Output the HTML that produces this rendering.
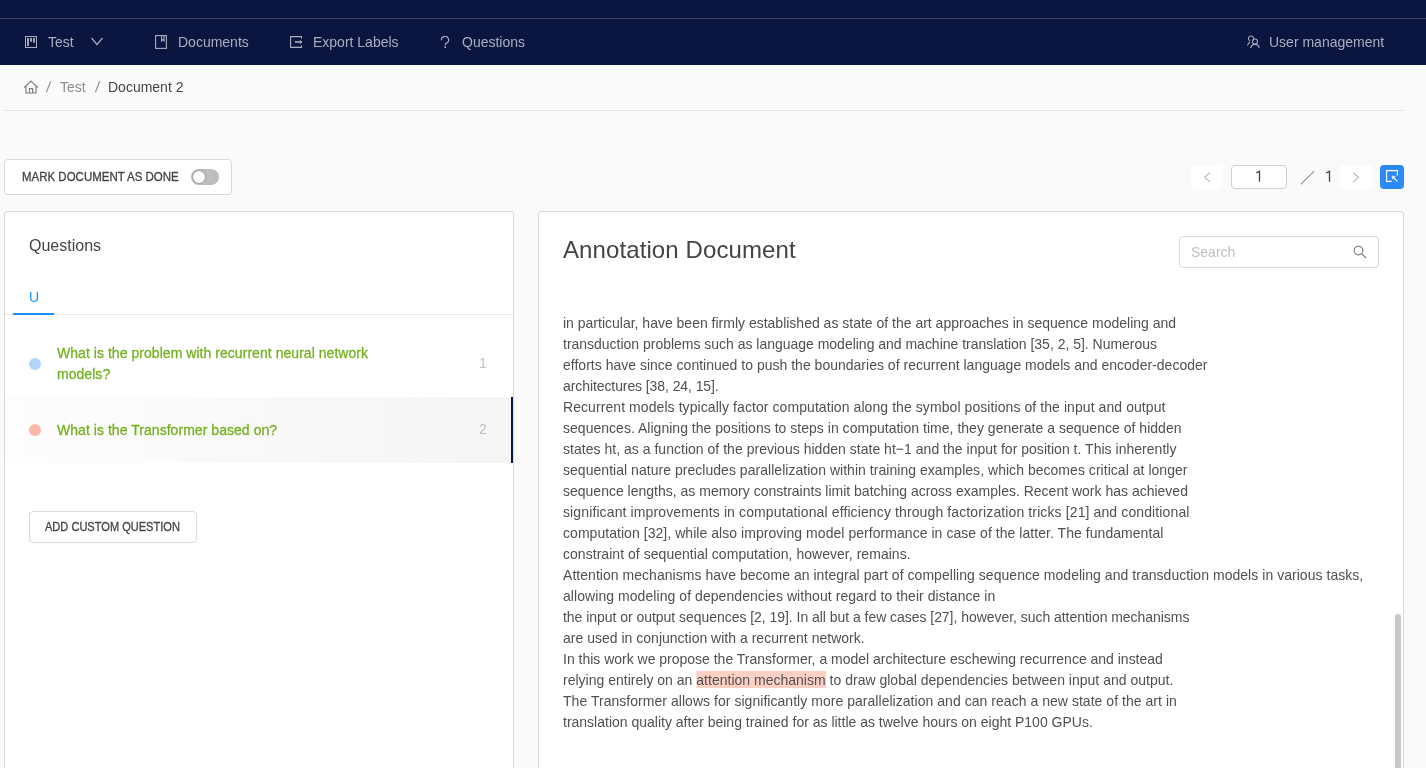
<!DOCTYPE html>
<html><head><meta charset="utf-8">
<style>
*{box-sizing:border-box;margin:0;padding:0}
body{will-change:transform}
html,body{width:1426px;height:768px;overflow:hidden;background:#fafafa;font-family:"Liberation Sans",sans-serif;font-size:14px;color:#595959}
.abs{position:absolute}
#top{left:0;top:0;width:1426px;height:65px;background:#0b1640}
#topline{left:0;top:18px;width:1426px;height:1px;background:#3b4468}
.nav{color:#aaaebf;font-size:14px;line-height:16px;white-space:nowrap}
.t15{font-size:15px !important;transform:scaleX(0.933);transform-origin:0 0}
svg{display:block}
#bc{left:0;top:64px;width:1426px;height:46px;background:#fafafa}
#bcline{left:4px;top:110px;width:1400px;height:1px;background:#e4e4e4}
.btn{background:#fff;border:1px solid #d9d9d9;border-radius:4px}
.panel{background:#fff;border:1px solid #d9d9d9;border-radius:3px}
.q{color:#74b01f;font-size:14px;line-height:21px;letter-spacing:0.05px;-webkit-text-stroke:0.3px #74b01f}
.ln{height:21px;transform:scaleX(0.933);transform-origin:0 0}
.doc{left:563px;top:312px;width:900px;font-size:15px;line-height:21px;color:#505050;white-space:nowrap}
</style></head><body>
<div id="top" class="abs"></div>
<div id="topline" class="abs"></div>

<!-- nav -->
<div class="abs" style="left:25px;top:36px"><svg width="12" height="12" viewBox="0 0 12 12"><rect x="0.5" y="0.5" width="11" height="11" fill="none" stroke="#aaaebf" stroke-width="1"/><rect x="2" y="2" width="2" height="8" fill="#9ea3b8"/><rect x="5" y="2" width="2" height="3.7" fill="#9ea3b8"/><rect x="8" y="2" width="2" height="4.6" fill="#9ea3b8"/></svg></div>
<div class="abs nav t15" style="left:48px;top:34px">Test</div>
<div class="abs" style="left:91px;top:37px"><svg width="12" height="9" viewBox="0 0 12 9" fill="none" stroke="#aaaebf" stroke-width="1.2"><path d="M0.5 1L6 7.5L11.5 1"/></svg></div>

<div class="abs" style="left:155px;top:35px"><svg width="12" height="14" viewBox="0 0 12 14" fill="none" stroke="#aaaebf" stroke-width="1.1"><rect x="0.6" y="0.6" width="10.8" height="12.8"/><path d="M6.6 0.6v5.2l1.2-1.2l1.2 1.2v-5.2"/></svg></div>
<div class="abs nav t15" style="left:178px;top:34px">Documents</div>

<div class="abs" style="left:290px;top:36px"><svg width="13" height="13" viewBox="0 0 13 13" fill="none" stroke="#aaaebf" stroke-width="1.1"><path d="M11.5 2.5V0.6H0.6V11.4H11.5V9.4"/><path d="M5 6h6" stroke-width="1.6"/><path d="M10.3 4.5L12 6L10.3 7.5Z" fill="#aaaebf" stroke-width="0.8"/></svg></div>
<div class="abs nav t15" style="left:313px;top:34px">Export Labels</div>

<div class="abs" style="left:439px;top:36px"><svg width="12" height="12" viewBox="0 0 12 12" fill="none" stroke="#aaaebf" stroke-width="1.2"><path d="M2.4 4.2A3.6 3.6 0 1 1 7.6 7.1Q6.2 7.8 6.2 9.3"/><rect x="5.4" y="10.4" width="1.6" height="1.6" fill="#aaaebf" stroke="none"/></svg></div>
<div class="abs nav t15" style="left:462px;top:34px">Questions</div>

<div class="abs" style="left:1246px;top:35px"><svg width="14" height="14" viewBox="0 0 14 14" fill="none" stroke="#aaaebf" stroke-width="1.1"><path d="M4.14 5.85A2.5 2.5 0 1 1 7.46 3.93"/><circle cx="9" cy="6.5" r="2.5"/><path d="M1.5 10.5Q2 8 4.2 7M4.6 13Q5.5 9.4 9 9.4Q12.5 9.4 13.3 13"/></svg></div>
<div class="abs nav t15" style="left:1269px;top:34px">User management</div>

<!-- breadcrumb -->
<div class="abs" style="left:23px;top:80px"><svg width="16" height="14" viewBox="0 0 16 14" fill="none" stroke="#7f7f7f" stroke-width="1.2"><path d="M1.3 7.5L7.9 1L14.8 7.5M3 6.8V13H13V6.8M6.5 13V8.6H9.6V13"/></svg></div>
<div class="abs" style="left:45px;top:80px"><svg width="7" height="14" viewBox="0 0 7 14" fill="none" stroke="#8c8c8c" stroke-width="1.1"><path d="M5.7 1.2L1.4 12.3"/></svg></div>
<div class="abs t15" style="left:60px;top:79px;color:#8c8c8c;line-height:16px">Test</div>
<div class="abs" style="left:94px;top:80px"><svg width="7" height="14" viewBox="0 0 7 14" fill="none" stroke="#8c8c8c" stroke-width="1.1"><path d="M5.7 1.2L1.4 12.3"/></svg></div>
<div class="abs t15" style="left:108px;top:79px;color:#444;line-height:16px">Document 2</div>
<div id="bcline" class="abs"></div>

<!-- mark done -->
<div class="abs btn" style="left:4px;top:159px;width:228px;height:36px"></div>
<div class="abs" style="left:21.5px;top:170px;font-size:12px;transform:scaleX(0.957);transform-origin:0 0;-webkit-text-stroke:0.3px #444;color:#444;line-height:14px;white-space:nowrap">MARK DOCUMENT AS DONE</div>
<div class="abs" style="left:191px;top:169px;width:28px;height:16px;border-radius:8px;background:#bcbdbc"></div>
<div class="abs" style="left:193px;top:171px;width:12px;height:12px;border-radius:6px;background:#fff;box-shadow:0 0 1.5px 0.5px rgba(0,0,0,.28)"></div>

<!-- pager -->
<div class="abs" style="left:1191px;top:165px;width:32px;height:24px;background:#fff;border-radius:4px"></div>
<div class="abs" style="left:1203px;top:172px"><svg width="8" height="11" viewBox="0 0 8 11" fill="none" stroke="#999" stroke-width="1"><path d="M7 0.6L1.6 5.3L7 10"/></svg></div>
<div class="abs btn" style="left:1231px;top:165px;width:56px;height:24px;border-color:#d0d0d0"></div>
<div class="abs" style="left:1255px;top:170px"><svg width="8" height="13" viewBox="0 0 8 13" fill="none" stroke="#444" stroke-width="1.3"><path d="M1.2 3L4.5 1.3V11.8"/></svg></div>
<div class="abs" style="left:1300px;top:171px"><svg width="14" height="14" viewBox="0 0 14 14" fill="none" stroke="#555" stroke-width="0.95"><path d="M1 13.3L14 0.4"/></svg></div>
<div class="abs" style="left:1325px;top:170px"><svg width="8" height="13" viewBox="0 0 8 13" fill="none" stroke="#444" stroke-width="1.3"><path d="M1.2 3L4.5 1.3V11.8"/></svg></div>
<div class="abs" style="left:1340px;top:165px;width:32px;height:24px;background:#fff;border-radius:4px"></div>
<div class="abs" style="left:1352px;top:172px"><svg width="8" height="11" viewBox="0 0 8 11" fill="none" stroke="#999" stroke-width="1"><path d="M1.2 0.6L6.6 5.3L1.2 10"/></svg></div>
<div class="abs" style="left:1380px;top:165px;width:24px;height:24px;background:#2b8af7;border-radius:4px"></div>
<div class="abs" style="left:1386px;top:170px"><svg width="13" height="13" viewBox="0 0 13 13" fill="none" stroke="#fff" stroke-width="1.1"><path d="M11.4 5.4V0.6H0.6V11.4H5.7"/><path d="M11.6 11.6L7.5 7.5"/><path d="M6.2 6.2L9.1 6.5L6.5 9.1Z" fill="#fff" stroke-width="0.6"/></svg></div>

<!-- left panel -->
<div class="abs panel" style="left:4px;top:211px;width:510px;height:600px"></div>
<div class="abs" style="left:29px;top:237px;font-size:16px;line-height:18px;color:#444">Questions</div>
<div class="abs" style="left:29px;top:289px;font-size:14px;line-height:16px;color:#1890ff">U</div>
<div class="abs" style="left:5px;top:314px;width:508px;height:1px;background:#e8e8e8"></div>
<div class="abs" style="left:13px;top:313px;width:41px;height:2px;background:#1890ff"></div>

<div class="abs" style="left:29px;top:358px;width:12px;height:12px;border-radius:6px;background:#b3d4fc"></div>
<div class="abs q t15" style="left:57px;top:342px;width:360px">What is the problem with recurrent neural network<br>models?</div>
<div class="abs t15" style="left:479px;top:355px;color:#bfbfbf;line-height:16px">1</div>

<div class="abs" style="left:5px;top:397px;width:508px;height:66px;background:linear-gradient(90deg,#fdfdfd,#f5f5f5)"></div>
<div class="abs" style="left:511px;top:397px;width:2px;height:66px;background:#0b1640"></div>
<div class="abs" style="left:29px;top:424px;width:12px;height:12px;border-radius:6px;background:#fcb8a8"></div>
<div class="abs q t15" style="left:57px;top:419px;white-space:nowrap">What is the Transformer based on?</div>
<div class="abs t15" style="left:479px;top:421px;color:#bfbfbf;line-height:16px">2</div>

<div class="abs btn" style="left:29px;top:511px;width:168px;height:32px"></div>
<div class="abs" style="left:45.2px;top:520px;font-size:12px;transform:scaleX(0.921);transform-origin:0 0;-webkit-text-stroke:0.3px #444;color:#444;line-height:14px;white-space:nowrap">ADD CUSTOM QUESTION</div>

<!-- right panel -->
<div class="abs panel" style="left:538px;top:211px;width:866px;height:600px"></div>
<div class="abs" style="left:563px;top:236px;font-size:24px;letter-spacing:0.1px;line-height:28px;color:#444;white-space:nowrap">Annotation Document</div>
<div class="abs btn" style="left:1179px;top:236px;width:200px;height:32px"></div>
<div class="abs t15" style="left:1191px;top:244px;color:#bfbfbf;line-height:16px">Search</div>
<div class="abs" style="left:1353px;top:245px"><svg width="14" height="14" viewBox="0 0 14 14" fill="none" stroke="#777" stroke-width="1.15"><circle cx="5.5" cy="5.5" r="4.3"/><path d="M8.6 8.6L13 13"/></svg></div>

<div class="abs doc" id="doc"><div class="ln" id="l0" style="letter-spacing:0.0000px">in particular, have been firmly established as state of the art approaches in sequence modeling and</div><div class="ln" id="l1" style="letter-spacing:-0.0130px">transduction problems such as language modeling and machine translation [35, 2, 5]. Numerous</div><div class="ln" id="l2" style="letter-spacing:0.0141px">efforts have since continued to push the boundaries of recurrent language models and encoder-decoder</div><div class="ln" id="l3" style="letter-spacing:-0.0907px">architectures [38, 24, 15].</div><div class="ln" id="l4" style="letter-spacing:0.0824px">Recurrent models typically factor computation along the symbol positions of the input and output</div><div class="ln" id="l5" style="letter-spacing:0.0254px">sequences. Aligning the positions to steps in computation time, they generate a sequence of hidden</div><div class="ln" id="l6" style="letter-spacing:0.0271px">states ht, as a function of the previous hidden state ht−1 and the input for position t. This inherently</div><div class="ln" id="l7" style="letter-spacing:0.0393px">sequential nature precludes parallelization within training examples, which becomes critical at longer</div><div class="ln" id="l8" style="letter-spacing:0.0034px">sequence lengths, as memory constraints limit batching across examples. Recent work has achieved</div><div class="ln" id="l9" style="letter-spacing:0.1284px">significant improvements in computational efficiency through factorization tricks [21] and conditional</div><div class="ln" id="l10" style="letter-spacing:0.0536px">computation [32], while also improving model performance in case of the latter. The fundamental</div><div class="ln" id="l11" style="letter-spacing:0.0437px">constraint of sequential computation, however, remains.</div><div class="ln" id="l12" style="letter-spacing:0.0457px">Attention mechanisms have become an integral part of compelling sequence modeling and transduction models in various tasks,</div><div class="ln" id="l13" style="letter-spacing:0.0694px">allowing modeling of dependencies without regard to their distance in</div><div class="ln" id="l14" style="letter-spacing:-0.0393px">the input or output sequences [2, 19]. In all but a few cases [27], however, such attention mechanisms</div><div class="ln" id="l15" style="letter-spacing:0.0134px">are used in conjunction with a recurrent network.</div><div class="ln" id="l16" style="letter-spacing:-0.0081px">In this work we propose the Transformer, a model architecture eschewing recurrence and instead</div><div class="ln" id="l17" style="letter-spacing:0.0124px">relying entirely on an <span style="background:#fcd0c4">attention mechanism</span> to draw global dependencies between input and output.</div><div class="ln" id="l18" style="letter-spacing:0.0429px">The Transformer allows for significantly more parallelization and can reach a new state of the art in</div><div class="ln" id="l19" style="letter-spacing:0.0000px">translation quality after being trained for as little as twelve hours on eight P100 GPUs.</div></div>

<div class="abs" style="left:1395px;top:614px;width:6px;height:160px;border-radius:3px;background:#c8c8c8"></div>
</body></html>
